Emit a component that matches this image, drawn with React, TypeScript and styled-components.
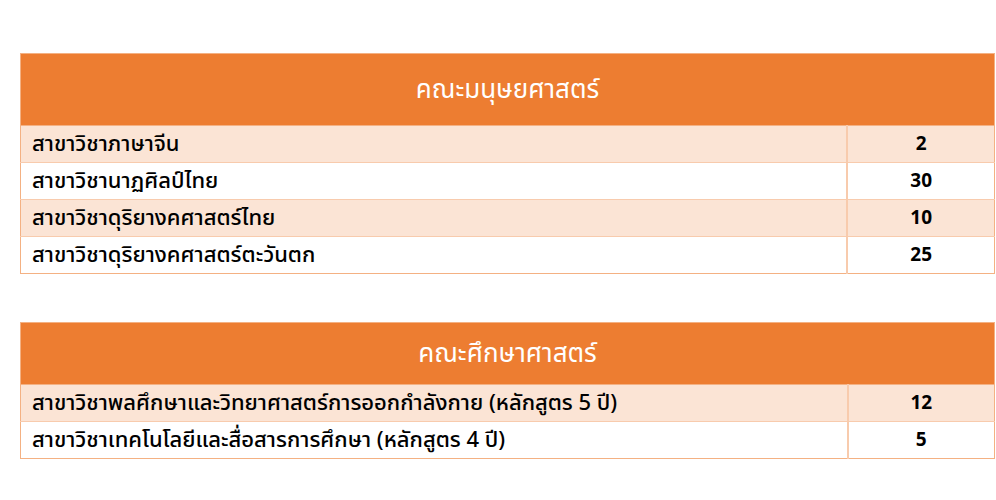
import React from "react";
import styled, { createGlobalStyle } from "styled-components";

const Global = createGlobalStyle`
  html, body { margin: 0; padding: 0; background: #ffffff; }
  body { font-family: "Noto Sans Thai", "Noto Sans", "Liberation Sans", sans-serif; }
`;

const Page = styled.div`
  padding: 53px 1px 0 20px;
  display: flex;
  flex-direction: column;
  gap: 48px;
`;

const Table = styled.table`
  width: 100%;
  border-collapse: collapse;
  table-layout: fixed;
  border: 1px solid #f4b183;
`;

const HeadCell = styled.th<{ $h: number }>`
  height: ${(p) => p.$h}px;
  background: #ed7d31;
  color: #ffffff;
  font-weight: 400;
  font-size: 26px;
  text-align: center;
  padding: 0;
  border-bottom: 1px solid #f4b183;
`;

const Row = styled.tr<{ $shade: boolean }>`
  background: ${(p) => (p.$shade ? "#fbe4d5" : "#ffffff")};
`;

const NameCell = styled.td`
  height: 36px;
  padding: 0 0 0 11px;
  font-size: 22px;
  font-weight: 500;
  color: #000;
  border-top: 1px solid #f8cbad;
  border-right: 2px solid #f8cbad;
  white-space: nowrap;
`;

const NumCell = styled.td`
  padding: 0;
  font-size: 19px;
  font-weight: 700;
  color: #000;
  text-align: center;
  border-top: 1px solid #f8cbad;
`;

type Faculty = { name: string; headH: number; rows: [string, number][] };

const data: Faculty[] = [
  {
    name: "คณะมนุษยศาสตร์",
    headH: 71,
    rows: [
      ["สาขาวิชาภาษาจีน", 2],
      ["สาขาวิชานาฏศิลป์ไทย", 30],
      ["สาขาวิชาดุริยางคศาสตร์ไทย", 10],
      ["สาขาวิชาดุริยางคศาสตร์ตะวันตก", 25],
    ],
  },
  {
    name: "คณะศึกษาศาสตร์",
    headH: 61,
    rows: [
      ["สาขาวิชาพลศึกษาและวิทยาศาสตร์การออกกำลังกาย (หลักสูตร 5 ปี)", 12],
      ["สาขาวิชาเทคโนโลยีและสื่อสารการศึกษา (หลักสูตร 4 ปี)", 5],
    ],
  },
];

export default function App() {
  return (
    <>
      <Global />
      <Page>
        {data.map((f) => (
          <Table key={f.name}>
            <colgroup>
              <col />
              <col style={{ width: 147 }} />
            </colgroup>
            <thead>
              <tr>
                <HeadCell colSpan={2} $h={f.headH}>
                  {f.name}
                </HeadCell>
              </tr>
            </thead>
            <tbody>
              {f.rows.map(([n, v], i) => (
                <Row key={n} $shade={i % 2 === 0}>
                  <NameCell>{n}</NameCell>
                  <NumCell>{v}</NumCell>
                </Row>
              ))}
            </tbody>
          </Table>
        ))}
      </Page>
    </>
  );
}
